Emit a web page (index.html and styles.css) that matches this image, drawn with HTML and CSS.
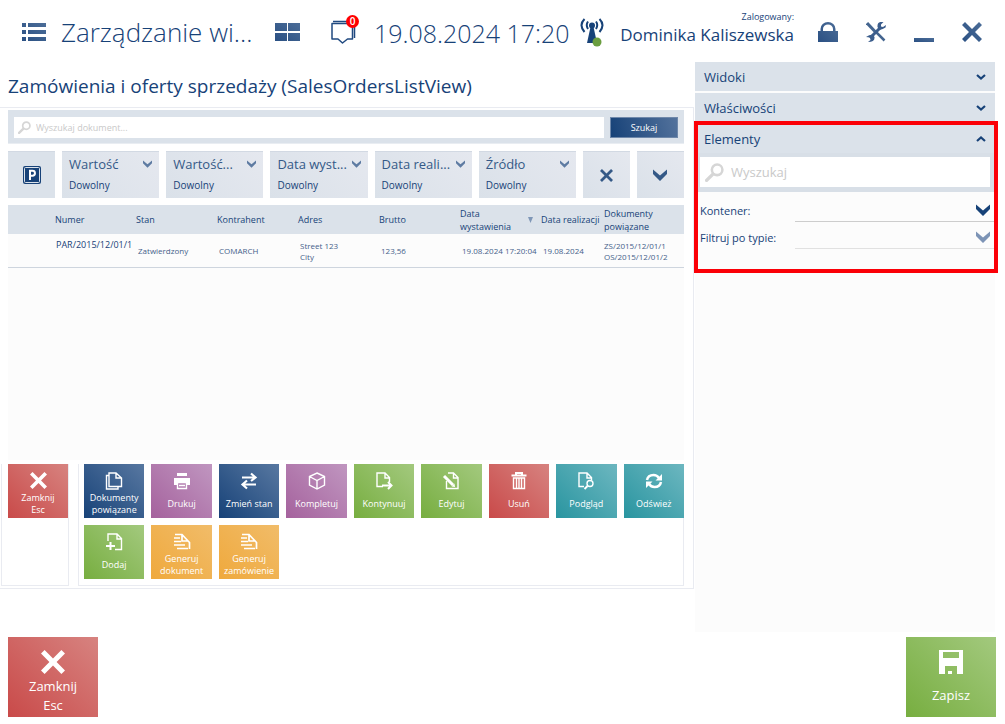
FILE: index.html
```html
<!DOCTYPE html>
<html lang="pl">
<head>
<meta charset="utf-8">
<meta name="viewport" content="width=device-width, initial-scale=1">
<title>Zarządzanie widokami</title>
<link rel="stylesheet" href="styles.css">
</head>
<body>
<svg class="defs" aria-hidden="true">
  <defs>
    <linearGradient id="navy" x1="0" y1="1" x2="1" y2="0"><stop offset="0" stop-color="#2a5083"/><stop offset="1" stop-color="#4c6d98"/></linearGradient>
    <symbol id="chevron" viewBox="0 0 14 12"><path d="M0 0.5 L7 6.5 L14 0.5 V5 L7 12 L0 5 Z"/></symbol>
    <symbol id="cross" viewBox="0 0 20 20"><path d="M3 0 L10 7 L17 0 L20 3 L13 10 L20 17 L17 20 L10 13 L3 20 L0 17 L7 10 L0 3 Z"/></symbol>
    <symbol id="loupe" viewBox="0 0 18 18"><circle cx="11.5" cy="6.5" r="5" fill="none" stroke="currentColor" stroke-width="2.4"/><path d="M7.5 10.5 L1.5 16.500" fill="none" stroke="currentColor" stroke-width="3.200" stroke-linecap="round"/></symbol>
  </defs>
</svg>

<header class="topbar">
  <button class="icon-btn menu-btn" aria-label="Menu"><svg width="24" height="18" viewBox="0 0 24 18" fill="url(#navy)"><path d="M0 0h4v4H0zM6 0h18v4H6zM0 7h4v4H0zM6 7h18v4H6zM0 14h4v4H0zM6 14h18v4H6z"/></svg></button>
  <h1 class="app-title">Zarządzanie wi...</h1>
  <button class="icon-btn tiles-btn" aria-label="Kafelki"><svg width="25" height="18" viewBox="0 0 25 18" fill="url(#navy)"><path d="M0 0h12v8H0zM13 0h12v8H13zM0 10h12v8H0zM13 10h12v8H13z"/></svg></button>
  <button class="icon-btn notice-btn" aria-label="Powiadomienia">
    <svg width="25" height="24" viewBox="0 0 25 24" fill="none" stroke="#204a80" stroke-width="1.500"><path d="M1 3.500 H21.500 V19 H16.500 L11.500 23 L7 19 H1 Z" stroke-linejoin="round"/><path d="M2 1.500 H19 M23.500 6 V18" stroke-width="1.500"/></svg>
    <span class="badge">0</span>
  </button>
  <time class="clock" datetime="2024-08-19T17:20">19.08.2024 17:20</time>
  <svg class="signal" width="24" height="29" viewBox="0 0 24 29" role="img" aria-label="Połączono"><g fill="none" stroke="#174278" stroke-width="2"><path d="M8 3.500 Q5.500 7 8 11M16 3.500 Q18.500 7 16 11"/><path d="M4.500 1 Q-1.500 7 4.500 14M19.500 1 Q25.500 7 19.500 14"/></g><circle cx="12" cy="7.500" r="3" fill="#174278"/><path d="M10.500 9h3L17 25H7Z" fill="#174278"/><circle cx="17" cy="24" r="4.500" fill="#6b9e40"/></svg>
  <div class="user"><span class="user-label">Zalogowany:</span><span class="user-name">Dominika Kaliszewska</span></div>
  <nav class="window-tools" aria-label="Okno">
    <button class="icon-btn" aria-label="Zablokuj"><svg width="20" height="20" viewBox="0 0 20 20"><path d="M0 9H2.500V7a7.500 7 0 0 1 15 0V9H20V20H0ZM5 9H15V7a5 4.500 0 0 0-10 0Z" fill="url(#navy)" fill-rule="evenodd"/></svg></button>
    <button class="icon-btn" aria-label="Narzędzia"><svg width="20" height="20" viewBox="0 0 20 20"><path d="M1 1 L9 9.500" stroke="#44658f" stroke-width="3"/><path d="M9 9 L18.500 18.500" stroke="#44658f" stroke-width="2.500"/><path d="M4 16 L15 5" stroke="#3b5d8c" stroke-width="3"/><path d="M17.500 0 Q11 -1 11.500 5 Q13 10 19.500 5.500 L20 3 L17 5 L15 4.500 L15 2.500 ZM0 15 Q7 10.500 8.500 15 Q9 20 2 20 L4.500 18 L4 15.500Z" fill="#3b5d8c"/></svg></button>
    <button class="icon-btn minimize" aria-label="Minimalizuj"><svg width="20" height="4" viewBox="0 0 20 4"><path d="M0 0h20v4H0z" fill="url(#navy)"/></svg></button>
    <button class="icon-btn" aria-label="Zamknij"><svg width="20" height="20" fill="url(#navy)"><use href="#cross"/></svg></button>
  </nav>
</header>

<main class="workspace">
  <section class="preview">
    <h2 class="view-title">Zamówienia i oferty sprzedaży (SalesOrdersListView)</h2>
    <div class="canvas">
      <form class="search-bar">
        <label class="search-box"><svg class="loupe" width="13" height="13"><use href="#loupe"/></svg><input class="search-input" type="text" placeholder="Wyszukaj dokument..." aria-label="Wyszukaj dokument"></label>
        <button class="search-submit" type="button">Szukaj</button>
      </form>

      <div class="filters">
        <button class="filter-icon parking" aria-label="Parking"><svg width="18" height="18" viewBox="0 0 18 18"><rect width="18" height="18" rx="2" fill="#174278"/><rect x="1.500" y="1.500" width="15" height="15" rx="1" fill="none" stroke="#dbe2ea" stroke-width="1"/><path d="M7 14V4.800H9.500a2.400 2.400 0 0 1 0 4.900H7" fill="none" stroke="#fff" stroke-width="2"/></svg></button>
        <button class="filter"><span class="filter-name">Wartość</span><svg class="chev"><use href="#chevron"/></svg><span class="filter-value">Dowolny</span></button>
        <button class="filter"><span class="filter-name">Wartość...</span><svg class="chev"><use href="#chevron"/></svg><span class="filter-value">Dowolny</span></button>
        <button class="filter"><span class="filter-name">Data wyst...</span><svg class="chev"><use href="#chevron"/></svg><span class="filter-value">Dowolny</span></button>
        <button class="filter"><span class="filter-name">Data reali...</span><svg class="chev"><use href="#chevron"/></svg><span class="filter-value">Dowolny</span></button>
        <button class="filter"><span class="filter-name">Źródło</span><svg class="chev"><use href="#chevron"/></svg><span class="filter-value">Dowolny</span></button>
        <button class="filter-icon" aria-label="Wyczyść filtry"><svg width="13" height="13"><use href="#cross"/></svg></button>
        <button class="filter-icon" aria-label="Rozwiń filtry"><svg width="14" height="12"><use href="#chevron"/></svg></button>
      </div>

      <div class="list">
        <table class="orders">
          <colgroup><col class="col-mark"><col class="col-std"><col class="col-std"><col class="col-std"><col class="col-std"><col class="col-std"><col class="col-std"><col class="col-date"><col></colgroup>
          <thead><tr><th></th><th>Numer</th><th>Stan</th><th>Kontrahent</th><th>Adres</th><th>Brutto</th><th><span class="sorted"><span>Data wystawienia</span><svg width="5" height="6" viewBox="0 0 5 6"><path d="M0 0h5L2.500 6z" fill="#7f97b7"/></svg></span></th><th>Data realizacji</th><th>Dokumenty powiązane</th></tr></thead>
          <tbody><tr><td></td><td class="number">PAR/2015/12/01/1</td><td>Zatwierdzony</td><td>COMARCH</td><td>Street 123<br>City</td><td>123,56</td><td>19.08.2024 17:20:04</td><td>19.08.2024</td><td class="related">ZS/2015/12/01/1<br>OS/2015/12/01/2</td></tr></tbody>
        </table>
      </div>

      <div class="actions">
        <div class="action-box close-box">
          <button class="tile red"><svg width="17" height="17" fill="#fff"><use href="#cross"/></svg><span>Zamknij<br>Esc</span></button>
        </div>
        <div class="action-box action-grid">
          <button class="tile blue"><svg width="18" height="18" viewBox="0 0 18 18"><path d="M4 1H11L16.500 6V14.500H4ZM11 1V6H16M4 3.500H1.500V17H13V15"/></svg><span>Dokumenty<br>powiązane</span></button>
          <button class="tile purple"><svg width="18" height="18" viewBox="0 0 18 18"><path d="M4 1H14V4H4ZM1 6H17V13H14V10H4V13H1Z" fill="#fff" stroke="none"/><path d="M4.500 10.500H13.500V16.500H4.500ZM6 13.500H12"/></svg><span>Drukuj</span></button>
          <button class="tile blue"><svg width="18" height="18" viewBox="0 0 18 18"><path d="M2 5.500H15M11 1.500L15.500 5.500L11 9M16 12.500H3M7 8.500L2.500 12.500L7 16.500" stroke-width="2.200"/></svg><span>Zmień stan</span></button>
          <button class="tile purple"><svg width="18" height="18" viewBox="0 0 18 18"><path d="M9 1L16.500 4.500V13L9 17L1.500 13V4.500ZM1.500 4.500L9 8.500L16.500 4.500M9 8.500V17"/></svg><span>Kompletuj</span></button>
          <button class="tile green"><svg width="18" height="18" viewBox="0 0 18 18"><path d="M8 14.500H2V1H10L14.500 5.500V10M10 1V6H14.500"/><path d="M7 13.500H16M13 10L16.500 13.500L13 17" stroke-width="2"/></svg><span>Kontynuuj</span></button>
          <button class="tile green"><svg width="18" height="18" viewBox="0 0 18 18"><path d="M6 1H11.500L16 5.500V16.500H4.500V9M11.500 1V6H16"/><path d="M2 4L11 13" stroke-width="3"/><path d="M9.500 14.500L13 15L12.500 11.500Z" fill="#fff" stroke="none"/></svg><span>Edytuj</span></button>
          <button class="tile red"><svg width="18" height="18" viewBox="0 0 18 18"><path d="M1.500 3.500H16.500M6 3V1H12V3" stroke-width="2"/><path d="M3.500 6V16.500H14.500V6ZM6.500 6V16M9 6V16M11.500 6V16"/></svg><span>Usuń</span></button>
          <button class="tile teal"><svg width="18" height="18" viewBox="0 0 18 18"><path d="M7 14.500H2V1H10L14.500 5.500V8M10 1V6H14.500"/><circle cx="13" cy="11.500" r="3"/><path d="M10.500 14L7.500 17" stroke-width="2"/></svg><span>Podgląd</span></button>
          <button class="tile teal"><svg width="18" height="18" viewBox="0 0 18 18"><path d="M2 8Q3 3 8.500 3Q12 3 14 6M16 10Q15 15 9.500 15Q6 15 4 12" stroke-width="2.500"/><path d="M17 2V8.500H10.500ZM1 16V9.500H7.500Z" fill="#fff" stroke="none"/></svg><span>Odśwież</span></button>
          <button class="tile green"><svg width="18" height="18" viewBox="0 0 18 18"><path d="M3 8V1H12L16.500 5.500V16.500H10M12 1V6H16.500"/><path d="M1 13H10M5.500 9V17" stroke-width="2"/></svg><span>Dodaj</span></button>
          <button class="tile orange"><svg width="18" height="18" viewBox="0 0 18 18"><path d="M2 1.500H9L16.500 9.500V16M9 2V8H15M1 5H7M1 8.500H8M1 12H12M4 15.500H15" stroke-width="1.700"/></svg><span>Generuj<br>dokument</span></button>
          <button class="tile orange"><svg width="18" height="18" viewBox="0 0 18 18"><path d="M2 1.500H9L16.500 9.500V16M9 2V8H15M1 5H7M1 8.500H8M1 12H12M4 15.500H15" stroke-width="1.700"/></svg><span>Generuj<br>zamówienie</span></button>
        </div>
      </div>
    </div>
  </section>

  <aside class="sidebar">
    <button class="accordion">Widoki<svg width="10" height="6" viewBox="0 0 10 6"><path d="M1 1L5 4.500L9 1"/></svg></button>
    <button class="accordion">Właściwości<svg width="10" height="6" viewBox="0 0 10 6"><path d="M1 1L5 4.500L9 1"/></svg></button>
    <section class="elements">
      <button class="accordion" aria-expanded="true">Elementy<svg width="10" height="6" viewBox="0 0 10 6"><path d="M1 5L5 1.500L9 5"/></svg></button>
      <div class="element-search"><label class="search-box"><svg class="loupe" width="19" height="19"><use href="#loupe"/></svg><input class="search-input large" type="text" placeholder="Wyszukaj" aria-label="Wyszukaj element"></label></div>
      <div class="fields">
        <div class="field"><label for="container">Kontener:</label><span class="picker"><select id="container"><option></option></select><svg width="14" height="12"><use href="#chevron"/></svg></span></div>
        <div class="field muted"><label for="type">Filtruj po typie:</label><span class="picker"><select id="type"><option></option></select><svg width="14" height="12"><use href="#chevron"/></svg></span></div>
      </div>
    </section>
  </aside>
</main>

<footer class="footer">
  <button class="big-tile red"><svg width="24" height="24" fill="#fff"><use href="#cross"/></svg><span>Zamknij<br>Esc</span></button>
  <button class="big-tile green"><svg width="24" height="24" viewBox="0 0 24 24"><path d="M0 0H24V24H18V16H6V24H0ZM4 2V8H20V2ZM9 21h4v3H9z" fill="#fff" fill-rule="evenodd"/></svg><span>Zapisz</span></button>
</footer>
</body>
</html>
```
FILE: styles.css
```css
* { box-sizing: border-box; }
body {
  margin: 0;
  min-height: 100vh;
  display: flex;
  flex-direction: column;
  background: #fff;
  color: #174278;
  font-family: "Open Sans", "Noto Sans", sans-serif;
}
button, input, select { font: inherit; color: inherit; border: 0; padding: 0; margin: 0; background: none; border-radius: 0; }
h1, h2 { margin: 0; font-weight: 400; }
svg { display: block; flex: none; }
.defs { position: absolute; width: 0; height: 0; }

.topbar { height: 62px; display: flex; align-items: center; padding: 2px 23px 0 22px; white-space: nowrap; }
.icon-btn { display: flex; position: relative; }
.app-title { width: 194px; flex: none; margin-left: 15px; font-size: 26px; font-weight: 300; line-height: 36px; }
.tiles-btn { margin-left: 20px; }
.notice-btn { margin-left: 31px; }
.badge { position: absolute; top: -5px; right: -3px; width: 13px; height: 13px; border-radius: 50%; background: #f00; color: #fff; font-size: 10px; font-weight: 600; line-height: 13px; text-align: center; }
.clock { width: 192px; flex: none; margin-left: 18px; font-size: 25px; font-weight: 300; line-height: 36px; padding-top: 2px; }
.signal { margin-left: 14px; }
.user { display: flex; flex-direction: column; align-items: flex-end; margin-left: auto; padding-bottom: 6px; }
.user-label { font-size: 9px; line-height: 12px; }
.user-name { font-size: 17px; line-height: 24px; }
.window-tools { display: flex; align-items: center; gap: 28px; margin-left: 24px; }
.minimize { padding-top: 16px; }

.workspace { display: grid; grid-template-columns: minmax(0, 1fr) 300px; gap: 1px; padding-right: 10px; min-height: 570px; }
.view-title { height: 45px; padding: 12px 8px 0; font-size: 19px; line-height: 25px; white-space: nowrap; }
.canvas { border: solid #e9ebf1; border-width: 1px 1px 1px 0; padding: 2px 9px 2px 0; }

.search-bar { display: flex; gap: 6px; margin-left: 8px; padding: 7px 6px 5px; background: #dbe2ea; border-bottom: 1px solid #e9edf2; }
.search-box { display: flex; align-items: center; flex: 1; min-width: 0; gap: 5px; padding-left: 4px; background: #fff; }
.loupe { color: #d6d6d6; }
.search-input { flex: 1; min-width: 0; height: 21px; font-size: 9px; outline: none; }
.search-input::placeholder { color: #c9c9c9; opacity: 1; }
.search-submit { width: 68px; height: 21px; background: linear-gradient(75deg, #174278, #53729c); border: 1px solid #6f88aa; color: #fff; font-size: 9px; font-weight: 500; }

.filters { display: grid; grid-template-columns: 47px repeat(5, minmax(0, 1fr)) 47px 47px; gap: 7px; margin: 7px 0 7px 8px; }
.filter, .filter-icon { height: 47px; background: linear-gradient(45deg, #dae1e9, #e5e8ef); border-top: 1px solid #d2d9e3; }
.filter { display: grid; grid-template-columns: minmax(0, 1fr) 9px; align-items: center; align-content: start; row-gap: 3px; padding: 2px 7px; text-align: left; white-space: nowrap; }
.filter-name { font-size: 13px; line-height: 20px; color: #345987; }
.filter-value { font-size: 10px; line-height: 16px; }
.chev { width: 9px; height: 8px; fill: #5e7ba2; }
.filter-icon { display: flex; align-items: center; justify-content: center; fill: #345987; }
.parking { background: #dbe2ea; }

.list { min-height: 255px; margin-left: 8px; background: #fcfcfc; }
.orders { width: 100%; table-layout: fixed; border-collapse: collapse; font-size: 9px; text-align: left; }
.orders th { height: 29px; padding: 0; background: #dbe2ea; font-weight: 400; line-height: 13px; }
.orders td { height: 33px; padding: 1px 0 0 2px; border-bottom: 1px solid #ced5de; font-size: 8px; line-height: 11px; color: #45618a; white-space: nowrap; }
.orders .number { padding: 4px 0 0 1px; vertical-align: top; font-size: 9px; line-height: 14px; color: #174278; }
.orders .related { padding-left: 0; }
.col-mark { width: 47px; }
.col-std { width: 81px; }
.col-date { width: 63px; }
.sorted { display: flex; align-items: center; justify-content: space-between; padding-right: 8px; }
.sorted span { width: 56px; }

.actions { display: grid; grid-template-columns: 68px minmax(0, 1fr); gap: 9px; margin-top: 4px; padding-left: 1px; }
.action-box { border: 1px solid #e9ebf1; border-top: 0; padding-bottom: 6px; }
.close-box { padding-left: 6px; }
.action-grid { display: grid; grid-template-columns: repeat(9, minmax(0, 1fr)); gap: 7px; padding-left: 5px; border-right: 0; }
.tile, .big-tile { display: flex; flex-direction: column; align-items: center; color: #fff; }
.tile { width: 100%; height: 54px; padding-top: 8px; font-size: 9px; line-height: 12px; white-space: nowrap; }
.tile svg { fill: none; stroke: #fff; stroke-width: 1.4; }
.tile svg[fill] { fill: #fff; stroke: none; }
.tile span, .big-tile span { flex: 1; display: flex; align-items: center; }
.red { background: linear-gradient(45deg, #c94a49, #d78380); }
.blue { background: linear-gradient(45deg, #174278, #5878a1); }
.purple { background: linear-gradient(45deg, #a5629d, #c096c0); }
.green { background: linear-gradient(45deg, #77ae40, #a3c97e); }
.teal { background: linear-gradient(45deg, #2995a0, #6db7c0); }
.orange { background: linear-gradient(45deg, #efa93d, #f1bc69); }
.action-grid { box-shadow: inset -1px 0 #e9ebf1; }

.sidebar { display: flex; flex-direction: column; gap: 2px; background: #fcfcfc; }
.accordion { display: flex; width: 100%; height: 29px; align-items: center; justify-content: space-between; padding: 0 9px; background: #dbe2ea; font-size: 13px; }
.accordion svg { fill: none; stroke: #174278; stroke-width: 2.2; }
.elements { position: relative; height: 147px; }
.elements::after { content: ""; position: absolute; inset: -3px -3px -2px -1px; border: 4px solid #fb0007; pointer-events: none; }
.element-search { padding: 4px 5px 5px; background: #d8dfe7; }
.element-search .search-box { gap: 7px; padding-left: 5px; }
.large { height: 30px; font-size: 13px; }
.fields { display: flex; flex-direction: column; padding: 5px 0 0 5px; font-size: 11px; }
.field { display: grid; grid-template-columns: 95px minmax(0, 1fr); height: 27px; align-items: center; }
.picker { display: flex; align-items: center; height: 22px; border-bottom: 1px solid #cdcdcd; padding-right: 5px; fill: #174278; }
.picker select { flex: 1; min-width: 0; appearance: none; outline: none; }
.muted .picker { fill: #7d94b6; border-color: #e1e1e1; }

.footer { display: flex; justify-content: space-between; padding: 5px 9px 7px 8px; }
.big-tile { width: 90px; height: 80px; padding-top: 13px; font-size: 13px; line-height: 19px; }
```
